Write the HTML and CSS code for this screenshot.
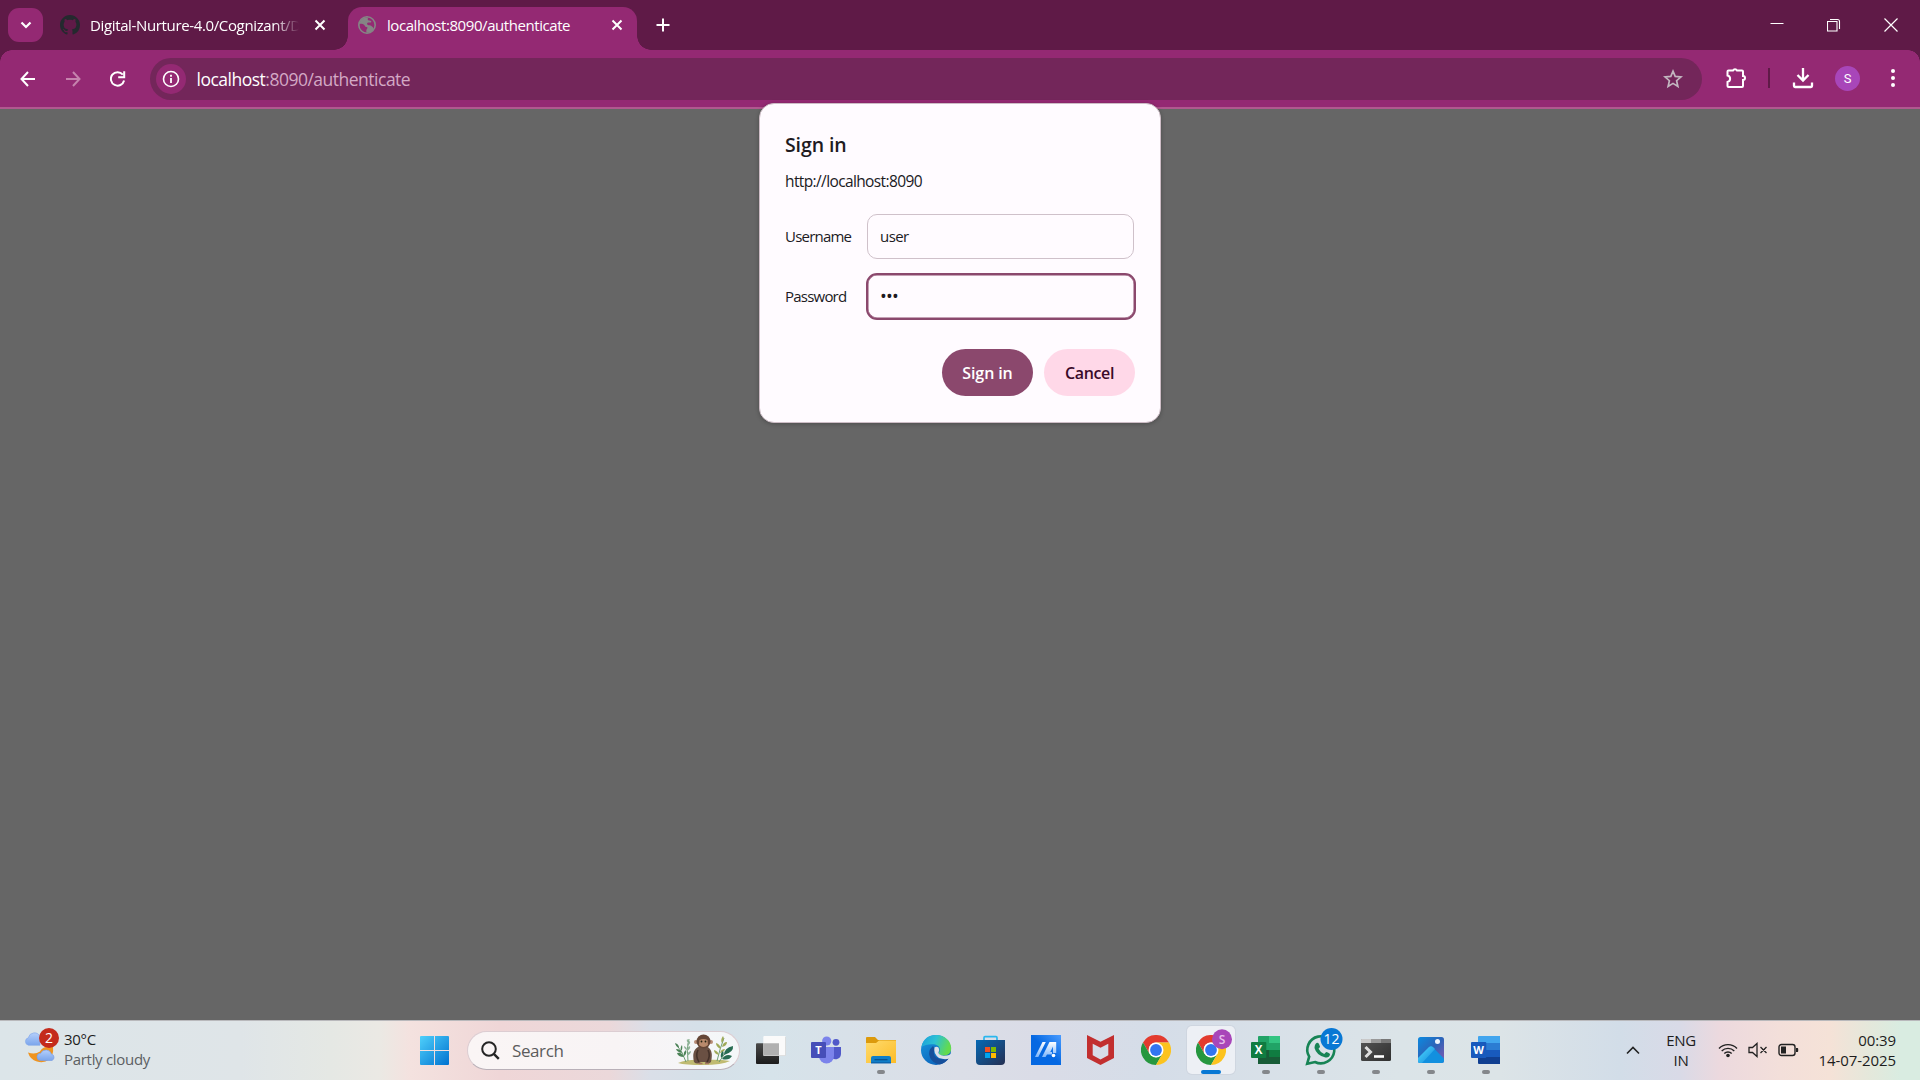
FILE: index.html
```html
<!DOCTYPE html>
<html lang="en">
<head>
<meta charset="utf-8">
<title>localhost:8090/authenticate</title>
<link rel="stylesheet" href="styles.css">
</head>
<body>
<svg width="0" height="0" class="defs" aria-hidden="true">
  <defs>
    <linearGradient id="gWin" x1="0" y1="0" x2="1" y2="1"><stop offset="0" stop-color="#4fd0fb"/><stop offset="1" stop-color="#0072d0"/></linearGradient>
    <linearGradient id="gDark" x1="0" y1="0" x2="0" y2="1"><stop offset="0" stop-color="#4a4a4a"/><stop offset="1" stop-color="#1c1c1c"/></linearGradient>
    <linearGradient id="gFolder" x1="0" y1="0" x2="1" y2="1"><stop offset="0" stop-color="#ffdb6e"/><stop offset="1" stop-color="#fcbc27"/></linearGradient>
    <linearGradient id="gStore" x1="0" y1="0" x2="1" y2="1"><stop offset="0" stop-color="#0669b5"/><stop offset="1" stop-color="#252f52"/></linearGradient>
    <linearGradient id="gAsus" x1="0" y1="1" x2="1" y2="0"><stop offset="0.5" stop-color="#0568e2"/><stop offset="1" stop-color="#4b9cff"/></linearGradient>
    <linearGradient id="gAsusMark" x1="0" y1="0" x2="0" y2="1"><stop offset="0" stop-color="#fff"/><stop offset="1" stop-color="#7db6fb"/></linearGradient>
    <linearGradient id="gEdgeTop" x1="0" y1="0" x2="1" y2="0.3"><stop offset="0" stop-color="#1b9ddb"/><stop offset="0.5" stop-color="#2cc1d4"/><stop offset="1" stop-color="#63db4e"/></linearGradient>
    <linearGradient id="gEdgeLeft" x1="0" y1="0" x2="0.6" y2="1"><stop offset="0" stop-color="#1a9be0"/><stop offset="1" stop-color="#0b62ba"/></linearGradient>
    <linearGradient id="gPhoto" x1="0" y1="0" x2="1" y2="1"><stop offset="0" stop-color="#0c8ae0"/><stop offset="0.5" stop-color="#2d63b8"/><stop offset="1" stop-color="#8a58b0"/></linearGradient>
    <linearGradient id="gHill" x1="0" y1="0" x2="1" y2="1"><stop offset="0" stop-color="#4fdcff"/><stop offset="1" stop-color="#1286dc"/></linearGradient>
    <linearGradient id="gCloud" x1="0" y1="0" x2="0" y2="1"><stop offset="0" stop-color="#b4cffb"/><stop offset="1" stop-color="#7ba5ec"/></linearGradient>
    <linearGradient id="gTerm" x1="0" y1="0" x2="1" y2="1"><stop offset="0" stop-color="#555"/><stop offset="1" stop-color="#303030"/></linearGradient>
    <symbol id="chrome" viewBox="0 0 30 30">
      <path fill="#e33b2e" d="M2 7.5A15 15 0 0 1 28 7.5H15A7.5 7.5 0 0 0 8.5 11.2L8.500 18.750Z"/>
      <path fill="#26973f" d="M2 7.500A15 15 0 0 0 15 30L21.500 18.750L15 22.500L8.500 18.750Z"/>
      <path fill="#fcc31e" d="M28 7.500A15 15 0 0 1 15 30L21.500 18.750V11.250L15 7.500Z"/>
      <circle cx="15" cy="15" r="7.500" fill="#fff"/><circle cx="15" cy="15" r="5.900" fill="#3275f0"/>
    </symbol>
  </defs>
</svg>

<div class="tabstrip">
  <button class="tab-search" aria-label="Search tabs"><svg width="12" height="8" viewBox="0 0 12 8"><path d="M1.500 1.500 6 6l4.500-4.500" fill="none" stroke="#fff" stroke-width="2.200"/></svg></button>
  <div class="tab">
    <svg width="20" height="20" viewBox="0 0 16 16"><path fill="#24292e" d="M8 0C3.580 0 0 3.580 0 8c0 3.540 2.290 6.530 5.470 7.590.4.070.55-.17.55-.38 0-.19-.01-.82-.01-1.490-2.010.37-2.530-.49-2.690-.94-.09-.23-.48-.94-.82-1.130-.28-.15-.68-.52-.01-.53.63-.01 1.080.58 1.230.82.72 1.210 1.870.87 2.330.66.07-.52.28-.87.51-1.070-1.780-.2-3.640-.89-3.640-3.950 0-.87.31-1.590.82-2.150-.08-.2-.36-1.020.08-2.120 0 0 .67-.21 2.200.82.64-.18 1.320-.27 2-.27s1.360.09 2 .27c1.530-1.040 2.200-.82 2.200-.82.44 1.100.16 1.920.08 2.120.51.56.82 1.270.82 2.150 0 3.070-1.870 3.750-3.650 3.950.29.25.54.73.54 1.480 0 1.070-.01 1.930-.01 2.200 0 .21.15.46.55.38A8 8 0 0 0 16 8c0-4.420-3.580-8-8-8Z"/></svg>
    <span class="tab-title faded">Digital-Nurture-4.0/Cognizant/D</span>
    <svg class="close" width="12" height="12" viewBox="0 0 12 12"><path d="m1.500 1.500 9 9m0-9-9 9" stroke="#fff" stroke-width="2"/></svg>
  </div>
  <div class="tab active">
    <svg width="18" height="18" viewBox="0 0 18 18"><circle cx="9" cy="9" r="8.200" fill="none" stroke="#858585" stroke-width="1.600"/><path fill="#858585" d="M9.500 1.500C5 1 1.500 4.500 1.400 8.200c2-.8 3.600-.3 4.600.6 1.200 1 .8 2 2.300 2.200 1.600.2 1.400 1.100.6 2-.8.900-.6 2.400-.4 3.800 3.500.4 6-1.200 7.400-4-.7-.7-.5-1.600-1.500-2-1.200-.500-1.300-1.400-2.700-1.500-1.400-.1-2.800-.6-2.600-1.900.2-1.300 2.200-.7 3.500-.9 1.100-.2.900-1.500-.3-1.700-1.100-.2-2.400-.2-2.600-1.200-.2-1 .8-1.400-.2-2.100Z"/></svg>
    <span class="tab-title">localhost:8090/authenticate</span>
    <svg class="close" width="12" height="12" viewBox="0 0 12 12"><path d="m1.500 1.500 9 9m0-9-9 9" stroke="#fff" stroke-width="2"/></svg>
  </div>
  <button class="new-tab" aria-label="New tab"><svg width="14" height="14" viewBox="0 0 14 14"><path d="M7 .5v13M.5 7h13" stroke="#fff" stroke-width="2"/></svg></button>
  <div class="window-controls">
    <svg width="14" height="14" viewBox="0 0 14 14"><path d="M.5 5.500h13" stroke="#fff"/></svg>
    <svg width="14" height="14" viewBox="0 0 14 14"><path d="M.5 3.500h9.500v9.500H.5ZM3 1.500h7.500a2 2 0 0 1 2 2V11" fill="none" stroke="#fff" stroke-width="1.100"/></svg>
    <svg width="14" height="14" viewBox="0 0 14 14"><path d="m.5.5 13 13m0-13-13 13" stroke="#fff" stroke-width="1.200"/></svg>
  </div>
</div>

<div class="toolbar">
  <div class="nav">
    <svg width="16" height="16" viewBox="0 0 16 16"><path d="M15 8H2M8 1 1.500 8 8 15" fill="none" stroke="#fff" stroke-width="2"/></svg>
    <svg width="16" height="16" viewBox="0 0 16 16"><path d="M1 8h13M8 1l6.500 7L8 15" fill="none" stroke="#c583ad" stroke-width="2"/></svg>
    <svg width="16" height="16" viewBox="0.500 0 16 16"><path d="M13.300 3.700A6.700 6.700 0 1 0 14.600 9.500M14.700.3v6H8.700" fill="none" stroke="#fff" stroke-width="2"/></svg>
  </div>
  <div class="omnibox">
    <span class="site-info"><svg width="18" height="18" viewBox="0 0 18 18"><circle cx="9" cy="9" r="7.500" fill="none" stroke="#fff" stroke-width="1.600"/><path d="M9 8v5M9 4.800v1.900" stroke="#fff" stroke-width="1.800"/></svg></span>
    <span class="url"><b>localhost</b>:8090/authenticate</span>
    <svg class="star" width="20" height="20" viewBox="0 0 20 20"><path d="m10 2.200 2.200 5.200 5.800.5-4.400 3.800 1.300 5.700-4.900-3-4.900 3 1.300-5.700L2 7.900l5.800-.5Z" fill="none" stroke="#c3b7c0" stroke-width="1.700"/></svg>
  </div>
  <div class="actions">
    <svg width="22" height="22" viewBox="0 0 22 22"><path d="M3.500 3.500H8a2.200 2 0 0 1 4 0h5a1 1 0 0 1 1 1V9a2 2 0 0 1 0 4v6a1 1 0 0 1-1 1H3.500a1 1 0 0 1-1-1v-4c3.500-1 3.500-5.500 0-6.500v-4a1 1 0 0 1 1-1Z" fill="none" stroke="#fff" stroke-width="2"/></svg>
    <i class="separator"></i>
    <svg width="22" height="22" viewBox="0 0 22 22"><path d="M11 1v12M5.500 8l5.500 5.500L16.500 8M2 15.500V19a1 1 0 0 0 1 1h16a1 1 0 0 0 1-1v-3.500" fill="none" stroke="#fff" stroke-width="2.300"/></svg>
    <span class="avatar">S</span>
    <svg width="6" height="20" viewBox="0 0 6 20" fill="#fff"><circle cx="3" cy="3" r="2"/><circle cx="3" cy="10" r="2"/><circle cx="3" cy="17" r="2"/></svg>
  </div>
</div>

<main class="page">
  <form class="dialog">
    <h1>Sign in</h1>
    <p class="origin">http://localhost:8090</p>
    <div class="field"><label for="user">Username</label><input id="user" type="text" value="user"></div>
    <div class="field focused"><label for="pass">Password</label><input id="pass" type="text" value="•••"></div>
    <div class="buttons"><button type="button" class="primary">Sign in</button><button type="button" class="secondary">Cancel</button></div>
  </form>
</main>

<footer class="taskbar">
  <div class="weather">
    <svg width="36" height="40" viewBox="0 0 36 40">
      <path d="M5.500 16.200a3.800 3.800 0 0 1-.2-7.400 6.200 6.200 0 0 1 11.700-1.300V16.200Z" fill="url(#gCloud)" stroke="#86aaea" stroke-width=".7"/>
      <path d="M5 23.500q7 2.500 12-1 2-4 6-4.500h7q1 8-4 12.500-5 4-12 2-7-2-9-9Z" fill="#ef9420"/>
      <path d="M17.500 31.500a3.600 3.600 0 0 1 .2-7.200 5.800 5.800 0 0 1 10.800.8 3.400 3.400 0 0 1 .5 6.400Z" fill="url(#gCloud)" stroke="#7d9fe2" stroke-width=".7"/>
    </svg>
    <span class="badge">2</span>
    <div class="weather-text"><span class="temp">30°C</span><span class="sky">Partly cloudy</span></div>
  </div>
  <div class="app"><svg viewBox="0 0 55 60"><path fill="url(#gWin)" d="M14 16h13v14H13V17q0-1 1-1ZM28 16h13q1 0 1 1v13H28ZM13 31h14v14H14q-1 0-1-1ZM28 31h14v13q0 1-1 1H28Z"/></svg></div>
  <div class="search">
    <svg width="19" height="19" viewBox="0 0 19 19"><circle cx="8" cy="8" r="6.800" fill="none" stroke="#242424" stroke-width="2"/><path d="m12.800 12.800 5 5" stroke="#242424" stroke-width="2.400"/></svg>
    <span>Search</span>
    <svg class="monkey" width="60" height="32" viewBox="0 0 60 32">
      <path d="M4 29q10-4 25-3 16-1 27 1-8 4-27 4-18 0-25-2Z" fill="#c0bb72"/>
      <g fill="none" stroke="#5d9467" stroke-width=".9"><path d="M12 28Q9 18 2 10M14 27q-2-12 1-22M43 27q3-13 7-23M45 28Q49 20 58 14"/></g>
      <g fill="#4d8358"><path d="M10 23q-6 0-7-4 5-1 7 4ZM8 19q-5-1-6-4 5 0 6 4ZM5 14q-3-1-4-5 4 1 4 5ZM10 22q3-2 2-6-3 2-2 6ZM7 17q2-2 1-6-2 2-1 6Z"/></g>
      <g fill="#8fb398"><path d="M13 17q4-2 3-5-3 1-3 5ZM13 12q4-2 3-5-3 1-3 5ZM13 16q-3-1-3-4 3 1 3 4ZM13 22q4-2 4-5-4 1-4 5ZM14 9q-2-2-1-4 2 1 1 4Z"/></g>
      <g fill="#a0aa58"><path d="M47 15q-5-2-5-6 4 1 5 6ZM48 9q-2-3 1-7 2 3-1 7ZM48 13q5-1 5-5-4 0-5 5ZM45 21q-5-1-5-5 4 1 5 5ZM46 19q4-1 5-4-4 0-5 4Z"/></g>
      <g fill="#286c52"><path d="M50 21q0-7 9-9 1 6-9 9ZM48 25q4-6 10-3-3 5-10 3ZM47 24q-1-5 2-7 2 4-2 7Z"/></g>
      <path d="M20 28q-3-13 6-16h6q8 3 5 16-4 3-6 0h-4q-4 3-7 0Z" fill="#6a5043"/>
      <path d="M24 16q-3 6 1 12M34 16q3 6-1 12" stroke="#45322a" stroke-width="1.600" fill="none"/>
      <circle cx="22" cy="8" r="2" fill="#b98c76"/><circle cx="37" cy="8" r="2" fill="#b98c76"/>
      <ellipse cx="29.500" cy="7.500" rx="7" ry="7" fill="#654636"/><path d="M25.500 6q4-2 8 0l.5 5q-4.500 4-9 0Z" fill="#b98a6c"/>
      <circle cx="27.500" cy="7.500" r=".9" fill="#221"/><circle cx="31.500" cy="7.500" r=".9" fill="#221"/>
      <path d="M24.500 29.500h4M31 29.500h4" stroke="#a5775f" stroke-width="1.500"/>
    </svg>
  </div>
  <div class="apps">
    <div class="app"><svg viewBox="0 0 55 60"><rect x="13" y="23.300" width="23" height="20.700" rx="1" fill="url(#gDark)"/><rect x="20.300" y="16" width="22.400" height="20" rx="1" fill="#fafafa"/><path d="M20.300 23.300H36V36H21.300q-1 0-1-1Z" fill="#b0b0b0"/><path d="M42.500 17v18.500H21" fill="none" stroke="#d2d2d2" stroke-width=".7"/></svg></div>
    <div class="app"><svg viewBox="0 0 55 60"><circle cx="38" cy="22.300" r="3.400" fill="#5059c9"/><path d="M32 27h11v7a5.500 5.500 0 0 1-9 4Z" fill="#5059c9"/><circle cx="28.700" cy="21" r="4.600" fill="#7b83eb"/><path d="M21 27h15v9a7.500 7.500 0 0 1-15 0Z" fill="#7b83eb"/><rect x="13" y="22" width="15" height="16" rx="1" fill="#464eb8"/><text x="20.500" y="34" class="glyph" font-size="11">T</text></svg></div>
    <div class="app"><svg viewBox="0 0 55 60"><path d="M13 24v-6q0-1 1-1h8l3 3h18v5Z" fill="#dc9a0c"/><path d="M13 23h10l3-2.500h17V43H13Z" fill="url(#gFolder)"/><path d="M18 43.300V38q0-2 2-2h16q2 0 2 2v5.300Z" fill="#107ec8"/><path d="M21.500 39.700h13" stroke="#0a4f8a" stroke-width="1.200"/><path d="M18 42.800h20" stroke="#0d5da3"/></svg><i class="running"></i></div>
    <div class="app"><svg viewBox="0 0 55 60"><circle cx="28" cy="30" r="15" fill="url(#gEdgeLeft)"/><path d="M13.500 27C15 18.500 21 15 28 15c9 0 15 6 15.200 13 .1 5-3 7.500-7.500 7.500-3.800 0-5.700-1.600-4.700-3 2-3 .5-7.500-5-8.200-5-.6-10 1-12.500 2.700Z" fill="url(#gEdgeTop)"/><path d="M25 26q-6 5-3 11.500 3 6.500 10 6.900 6-1.500 9-6.400-7 3.500-13-.8-4-3.500-1-7.900Z" fill="#164f9b"/><path d="M26.500 27.500q2-1.500 4 0 1.500 2.500 0 5 0 2.500 5 3.200 5 .2 7.500-1.700l.8 3-2.300 1.500q-5 1.500-10.500-.5-6-4.500-4.500-10.500Z" fill="#dbe0e9"/></svg></div>
    <div class="app"><svg viewBox="0 0 55 60"><path d="M21 21v-3.300q0-1 1-1h11q1 0 1 1V21" fill="none" stroke="#2bb7ee" stroke-width="1.700"/><path d="M13 20h29v21q0 4-4 4H17q-4 0-4-4Z" fill="url(#gStore)"/><path fill="#f25022" d="M22 27h5v5h-5z"/><path fill="#7fba00" d="M28 27h5v5h-5z"/><path fill="#00a4ef" d="M22 33h5v5h-5z"/><path fill="#ffb900" d="M28 33h5v5h-5z"/></svg></div>
    <div class="app"><svg viewBox="0 0 55 60"><path d="M13 15h30v30H13z" fill="url(#gAsus)"/><path d="m17 37 7.500-15h3.300l-7.500 15ZM24 37l7.500-15h6.700v11H35v-6.500L32.300 32H34v2.500h-5L27.500 37Z" fill="url(#gAsusMark)"/><circle cx="35.500" cy="35.500" r="1.800" fill="#fff"/></svg></div>
    <div class="app"><svg viewBox="0 0 55 60"><path fill="#c22f2f" fill-rule="evenodd" d="m14 15 13.500 6.700L41 15v23l-13.500 7L14 38Zm5.700 8.800v11.500l7.800 4.200 7.800-4.200V23.800l-7.800 4Z"/></svg></div>
    <div class="app"><svg viewBox="0 0 55 60"><use href="#chrome" x="13" y="15" width="30" height="30"/></svg></div>
    <div class="app current"><svg viewBox="0 0 55 60"><use href="#chrome" x="13" y="15" width="30" height="30"/><circle cx="39" cy="19.300" r="10" fill="#a846b9"/><text x="39" y="23.500" class="glyph soft" font-size="12">S</text></svg><i class="running"></i></div>
    <div class="app"><svg viewBox="0 0 55 60"><path fill="#21a366" d="M20 17q0-1 1-1h21v28H21q-1 0-1-1Z"/><path fill="#33c481" d="M31 16h11v7H31z"/><path fill="#107c41" d="M20 30h22v7H20z"/><path fill="#185c37" d="M20 37h22v7H20z"/><path fill="#185c37" d="M20 30h11v7H20z"/><rect x="13" y="22" width="15.300" height="16" rx="1" fill="#107c41"/><text x="20.600" y="34" class="glyph" font-size="11.500">X</text></svg><i class="running"></i></div>
    <div class="app"><svg viewBox="0 0 55 60"><path d="m14.200 43.700 2-7A13.500 13.500 0 1 1 22 42Z" fill="none" stroke="#178455" stroke-width="2.600"/><path d="M22.500 24q2-2.500 3.500 0l1 2.500q0 1-1.500 2.200 2 3.800 5.700 5.300l2-2q3.800 1.200 3.800 2.500-.7 3.500-4.500 3-9-2-11-9.500 0-2.500 1-4Z" fill="#178455"/><circle cx="38.500" cy="19" r="11" fill="#0878d4"/><text x="38.500" y="24" class="count">12</text></svg><i class="running"></i></div>
    <div class="app"><svg viewBox="0 0 55 60"><rect x="13" y="19" width="30" height="22" rx="1.500" fill="url(#gTerm)"/><path d="M14 19h9v4H13v-3q0-1 1-1Z" fill="#c9c9c9"/><path d="M23 19h10v4H23z" fill="#999"/><path d="M33 19h9q1 0 1 1v3H33z" fill="#777"/><path d="m17.500 27 5 5-5 5" fill="none" stroke="#ddd" stroke-width="3"/><path d="M26 36.500h10" stroke="#fff" stroke-width="2.600"/></svg><i class="running"></i></div>
    <div class="app"><svg viewBox="0 0 55 60"><rect x="15" y="17" width="26" height="26" rx="2.500" fill="url(#gPhoto)"/><path d="m15 39 11-11.500q2-2 4 0L41 38.500V41q0 2-2 2H17q-2 0-2-2Z" fill="#1290df"/><path d="m15 38 11-11q2-1.500 4 0l2 2-13 14h-2q-2 0-2-2Z" fill="url(#gHill)"/><circle cx="34.500" cy="21.500" r="2.500" fill="#eef6ff"/></svg><i class="running"></i></div>
    <div class="app"><svg viewBox="0 0 55 60"><path fill="#41a5ee" d="M20 17q0-1 1-1h21v7H20z"/><path fill="#2b7cd3" d="M20 23h22v7H20z"/><path fill="#185abd" d="M20 30h22v7H20z"/><path fill="#103f91" d="M20 37h22v7H21q-1 0-1-1Z"/><rect x="13" y="22" width="15.300" height="16" rx="1" fill="#185abd"/><text x="20.600" y="34" class="glyph" font-size="11">W</text></svg><i class="running"></i></div>
  </div>
  <div class="tray">
    <svg class="chevron" width="14" height="9" viewBox="0 0 14 9"><path d="m1 7.500 6-6 6 6" fill="none" stroke="#222" stroke-width="1.600"/></svg>
    <div class="lang"><span>ENG</span><span>IN</span></div>
    <div class="status">
      <svg width="20" height="16" viewBox="0 0 20 16"><g fill="none" stroke="#222" stroke-width="1.400"><path d="M1 6.500a12.500 12.500 0 0 1 18 0M3.700 9a8.900 8.900 0 0 1 12.600 0M6.300 11.600a5.200 5.200 0 0 1 7.400 0"/></g><circle cx="10" cy="13.500" r="1.800" fill="#222"/></svg>
      <svg width="20" height="16" viewBox="0 0 20 16"><path d="M1 5.500h3.500L9 1.500v13l-4.500-4H1ZM12.500 5l6 6m0-6-6 6" fill="none" stroke="#222" stroke-width="1.300"/></svg>
      <svg width="21" height="14" viewBox="0 0 21 14"><rect x="1" y="1.500" width="16" height="11" rx="2.500" fill="none" stroke="#222" stroke-width="1.400"/><path d="M3 3.500h5v7H3zM18 5h1.500q.7 0 .7 1v2q0 1-.7 1H18z" fill="#222"/></svg>
    </div>
    <div class="clock"><span>00:39</span><span>14-07-2025</span></div>
  </div>
</footer>
</body>
</html>
```
FILE: styles.css
```css
* { box-sizing: border-box; }
body {
  margin: 0;
  width: 1920px;
  height: 1080px;
  overflow: hidden;
  display: flex;
  flex-direction: column;
  font-family: "Open Sans", "Noto Sans", sans-serif;
  font-size: 15px;
  background: #666;
}
svg { display: block; flex: none; }
.defs { position: absolute; }
button { border: 0; padding: 0; font: inherit; }

/* Tab strip */
.tabstrip { height: 50px; flex: none; display: flex; background: #5f1a47; color: #fff; }
.tab-search {
  width: 35px; height: 34px; margin: 8px 0 0 8px; border-radius: 11px;
  background: #942973; display: flex; align-items: center; justify-content: center;
}
.tab { display: flex; align-items: center; width: 305px; padding: 0 22px 0 17px; }
.tab-title { margin-left: 10px; width: 209px; white-space: nowrap; overflow: hidden; letter-spacing: -0.43px; }
.faded { letter-spacing: -0.36px; -webkit-mask-image: linear-gradient(90deg, #000 88%, transparent 100%); mask-image: linear-gradient(90deg, #000 88%, transparent 100%); }
.close { margin-left: auto; }
.active {
  position: relative; width: 289px; height: 43px; margin-top: 7px; padding: 0 14px 7px 10px;
  background: #942973; border-radius: 14px 14px 0 0;
}
.active .tab-title { margin-left: 11px; }
.active::before, .active::after {
  content: ""; position: absolute; bottom: 0; width: 14px; height: 14px;
}
.active::before { left: -14px; background: radial-gradient(circle at 0 0, transparent 13.500px, #942973 14px); }
.active::after { right: -14px; background: radial-gradient(circle at 100% 0, transparent 13.500px, #942973 14px); }
.new-tab { margin-left: 19px; height: 50px; background: none; }
.window-controls { margin-left: auto; display: flex; gap: 43px; padding: 18px 22px 0 0; }

/* Toolbar */
.toolbar {
  height: 59px; flex: none; display: flex; align-items: flex-start; padding-top: 8px;
  background: radial-gradient(circle at 12px 12px, #942973 11.500px, #5f1a47 12px) 0 0 / 12px 12px no-repeat,
    radial-gradient(circle at 0 12px, #942973 11.500px, #5f1a47 12px) 100% 0 / 12px 12px no-repeat, #942973;
  border-bottom: 2px solid #b0598f;
}
.nav { display: flex; align-items: center; gap: 29px; height: 42px; width: 150px; padding: 0 0 1px 20px; }
.omnibox { display: flex; align-items: center; width: 1552px; height: 42px; border-radius: 21px; background: #73265a; padding: 0 19.500px 0 6px; }
.site-info { width: 30px; height: 30px; margin-top: -1px; border-radius: 50%; background: #942973; display: flex; align-items: center; justify-content: center; }
.url { margin-left: 10.500px; font-size: 17.500px; letter-spacing: -0.5px; color: #d3a9c5; }
.url b { font-weight: 400; color: #fff; }
.star { margin-left: auto; }
.actions { display: flex; align-items: center; height: 40px; padding-left: 23px; }
.separator { width: 2px; height: 20px; margin: 0 22px 0 21px; background: #5f1a47; }
.avatar {
  width: 25px; height: 25px; margin: 0 29.500px 0 21px; border-radius: 50%; background: #a846b9; color: #fff;
  font: 13px/25px Roboto, sans-serif; text-align: center;
}

/* Page and sign-in dialog */
.page { flex: 1; display: flex; justify-content: center; align-items: flex-start; background: #666; }
.dialog {
  position: relative; width: 402px; height: 320px; margin-top: -6px; padding: 27px 26px 0 25px;
  border: 1px solid #cdbdc6; border-radius: 15px; background: #fffbff; color: #201a1e;
  box-shadow: 0 1px 4px rgba(0, 0, 0, .25);
}
.dialog h1 { margin: 0; font-size: 19.500px; line-height: 28px; font-weight: 600; letter-spacing: -0.1px; }
.origin { margin: 12px 0 23px; font-size: 15.500px; line-height: 20px; letter-spacing: -0.62px; }
.field { display: flex; align-items: center; justify-content: space-between; height: 45px; letter-spacing: -0.78px; }
.field label { margin-top: -1px; }
.field input {
  width: 267px; height: 45px; padding: 0 12px 1px; border: 1px solid #cfc1ca; border-radius: 10px;
  background: transparent; font: inherit; letter-spacing: -0.55px; color: #201a1e; outline: 0;
}
.focused { margin: 14px -2px 0 0; height: 47px; }
.focused input { width: 270px; height: 47px; border: 2px solid #8b486d; border-radius: 11px; box-shadow: inset 0 0 0 .5px #8b486d; font-size: 18px; letter-spacing: -0.8px; }
.buttons { display: flex; justify-content: flex-end; gap: 11px; margin: 29px -1px 0 0; }
.buttons button { width: 91px; height: 47px; border-radius: 24px; font-size: 16px; font-weight: 600; letter-spacing: -0.35px; }
.buttons .primary { background: #8b486d; color: #fff; letter-spacing: -0.1px; }
.secondary { background: #ffd8e8; color: #3a0a29; }

/* Taskbar */
.taskbar {
  height: 60px; flex: none; display: flex; align-items: center; color: #1d1d1d;
  box-shadow: inset 0 1px #b9b9bc;
  background: linear-gradient(90deg, #dce5e9 0, #dfe5e8 240px, #e5e8e4 330px, #ebe9e4 380px, #f4e2df 410px, #efd6d7 500px, #ebd8da 610px, #dadfe8 650px, #d5e0e8 700px, #d6e3ea 770px, #dbdee7 960px, #dadce7 1040px, #d5dde8 1150px, #dbe4e8 1400px, #dce4e7 1500px, #d2dde8 1620px, #d9dae7 1680px, #ecd9de 1720px, #f3dfda 1780px, #f5e2d7 1830px, #e4e8db 1870px, #d9ece1 1900px);
}
.weather { position: relative; width: 407px; height: 60px; display: flex; padding: 9px 0 0 23px; }
.badge {
  position: absolute; left: 39px; top: 8px; width: 20px; height: 20px; border-radius: 50%;
  background: #c42b1c; color: #fff; font-size: 14px; line-height: 20px; text-align: center;
}
.weather-text { display: flex; flex-direction: column; margin-left: 5px; line-height: 20px; letter-spacing: -0.3px; }
.sky { color: #5c6063; }
.app { position: relative; width: 55px; height: 60px; }
.app svg { position: relative; width: 55px; height: 60px; }
.apps { display: flex; margin-left: 3px; }
.running { position: absolute; left: 24px; top: 50px; width: 8px; height: 4px; border-radius: 2px; background: #84878b; }
.current::before {
  content: ""; position: absolute; left: 4px; top: 6px; width: 48px; height: 48px; border-radius: 5px;
  background: #edf0f5; box-shadow: 0 0 0 1px rgba(200, 205, 215, .5);
}
.current .running { left: 18px; width: 20px; background: #0878d4; }
.glyph { font-weight: 700; fill: #fff; text-anchor: middle; }
.soft { font-weight: 600; fill: #e6bfec; }
.count { font-size: 14px; fill: #fff; text-anchor: middle; }
.search {
  width: 273px; height: 39px; margin-left: 5px; border-radius: 20px; display: flex; align-items: center;
  padding: 0 5px 0 13px; font-size: 17px; color: #5c5c5c; letter-spacing: -0.4px;
  background: linear-gradient(90deg, #faf5f5, #f8f4f5 55%, #f4f7f9); border: 1px solid #dccdd2; border-bottom-color: #b9b0b8;
}
.search span { margin-left: 12px; }
.monkey { margin-left: auto; }
.tray { flex: 1; display: flex; align-items: center; padding: 0 24px 0 113px; letter-spacing: -0.3px; line-height: 20px; }
.lang { width: 40px; margin-left: 21px; display: flex; flex-direction: column; align-items: center; }
.status { display: flex; align-items: center; gap: 10px; margin-left: 17px; }
.clock { margin-left: auto; display: flex; flex-direction: column; align-items: flex-end; letter-spacing: -0.08px; }
```
